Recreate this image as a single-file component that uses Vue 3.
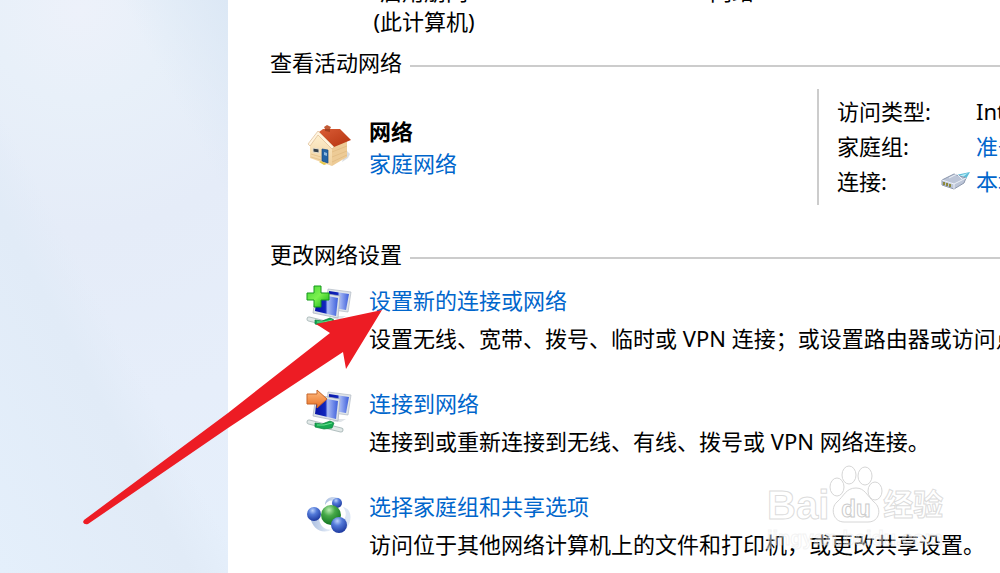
<script setup>
	import {ref} from 'vue'

	const info = ref([
		{label: '访问类型:', value: 'Internet', link: false},
		{label: '家庭组:', value: '准备创建', link: true},
		{label: '连接:', value: '本地连接', link: true, plug: true},
	])

	const tasks = ref([
		{icon: 'add', title: '设置新的连接或网络', text: '设置无线、宽带、拨号、临时或 VPN 连接；或设置路由器或访问点。'},
		{icon: 'connect', title: '连接到网络', text: '连接到或重新连接到无线、有线、拨号或 VPN 网络连接。'},
		{icon: 'group', title: '选择家庭组和共享选项', text: '访问位于其他网络计算机上的文件和打印机，或更改共享设置。'},
	])
</script>

<template>
	<div class="page">
		<aside class="side"></aside>
		<main class="main">
			<div class="map">
				<div class="computer">启用朋网<br>(此计算机)</div>
				<div class="middle">网络</div>
				<div class="internet">Internet</div>
			</div>

			<h2 class="title">查看活动网络</h2>
			<section class="active">
				<svg class="house" viewBox="0 0 48 48">
					<defs>
						<linearGradient id="roof" x1="0" y1="0" x2="1" y2="1">
							<stop offset="0" stop-color="#d95c36" />
							<stop offset="1" stop-color="#b5330f" />
						</linearGradient>
						<linearGradient id="wall" x1="0" y1="0" x2="0" y2="1">
							<stop offset="0" stop-color="#fff0cf" />
							<stop offset="1" stop-color="#efcf9c" />
						</linearGradient>
					</defs>
					<path d="M40 26L44 30L42 34L36 38Z" fill="#c9ced6" opacity=".7" />
					<path d="M26 22L41 16V33L26 42Z" fill="#edcb96" />
					<path d="M4 21L12 10L26 23V42L4 34Z" fill="url(#wall)" />
					<path d="M26 28L41 22M26 33L41 27M26 38L41 31M5 30L15 33M5 33L15 36" stroke="#dcb57c" stroke-width=".6" />
					<path d="M13 8L17 5H34L45 16L28 23Z" fill="url(#roof)" />
					<path d="M19 3H24V8L19 7Z" fill="#a5401f" />
					<path d="M18 3L21 1L25 3L24 5H19Z" fill="#c25b36" />
					<path d="M2 20L12 7L28 23L26 25L12 11L4 22Z" fill="#fff4df" stroke="#d9b285" stroke-width=".6" />
					<path d="M7 24L13 25V29L7 28Z" fill="#333f49" stroke="#e9e1cf" />
					<path d="M16 25L22 26V39L16 37Z" fill="#2464a6" stroke="#17497f" stroke-width=".7" />
					<path d="M18 28L21 29V32L18 31Z" fill="#8fb9de" />
					<path d="M15 37L21 40L18 41L13 38Z" fill="#e6c84a" />
				</svg>
				<div class="network">
					<strong>网络</strong>
					<a href="#">家庭网络</a>
				</div>
				<dl class="info">
					<div v-for="item in info" :key="item.label" class="info-row">
						<dt>{{ item.label }}</dt>
						<dd>
							<svg v-if="item.plug" class="plug" viewBox="0 0 30 20">
								<path d="M15 4L29 1L25 8L21 11Z" fill="#5dbbd8" />
								<path d="M17 5L27 2L22 6Z" fill="#b5edf6" />
								<path d="M1 9L13 3L25 7L23 12L13 18L1 14Z" fill="#bcc5d7" stroke="#8c97ad" />
								<path d="M1 9L13 13L25 7M13 13V18M8 7L16 3L21 8" fill="none" stroke="#edf1f8" />
								<path d="M3 11V14M6 12V15M9 13V16" stroke="#8d8a3c" stroke-width="2" />
							</svg>
							<a v-if="item.link" href="#">{{ item.value }}</a>
							<span v-else>{{ item.value }}</span>
						</dd>
					</div>
				</dl>
			</section>

			<h2 class="title">更改网络设置</h2>
			<ul class="tasks">
				<li v-for="task in tasks" :key="task.icon" class="task">
					<svg v-if="task.icon == 'group'" class="icon" viewBox="0 0 48 48">
						<defs>
							<radialGradient id="blue" cx=".4" cy=".25" r=".75">
								<stop offset="0" stop-color="#b9d0fb" />
								<stop offset=".4" stop-color="#5279d8" />
								<stop offset="1" stop-color="#1d399f" />
							</radialGradient>
							<radialGradient id="green" cx=".4" cy=".25" r=".75">
								<stop offset="0" stop-color="#b9edb0" />
								<stop offset=".4" stop-color="#47a949" />
								<stop offset="1" stop-color="#107320" />
							</radialGradient>
							<linearGradient id="swirl">
								<stop offset="0" stop-color="#a9bddf" />
								<stop offset="1" stop-color="#eef4fb" />
							</linearGradient>
						</defs>
						<path d="M4 25C6 39 17 44 27 38C18 40 13 34 13 26Z" fill="url(#swirl)" />
						<path d="M19 14C19 5 30 4 36 9L31 12C26 8 22 9 19 14Z" fill="url(#swirl)" />
						<path d="M37 16C47 18 46 31 40 38L35 31C41 27 41 21 37 16Z" fill="#dce6f4" />
						<circle cx="31" cy="12" r="5" fill="url(#blue)" />
						<circle cx="8" cy="23" r="7" fill="url(#blue)" />
						<circle cx="25" cy="24" r="10" fill="url(#green)" />
						<circle cx="33" cy="34" r="8" fill="url(#blue)" />
					</svg>
					<svg v-else class="icon" viewBox="0 0 48 48">
						<defs>
							<linearGradient id="screen" x1="0" y1="0" x2="1" y2="0">
								<stop offset="0" stop-color="#0713a5" />
								<stop offset=".45" stop-color="#1026bc" />
								<stop offset=".55" stop-color="#a9bbf5" />
								<stop offset="1" stop-color="#3c5edb" />
							</linearGradient>
							<linearGradient id="orange" x1="0" y1="0" x2="0" y2="1">
								<stop offset="0" stop-color="#ffbd82" />
								<stop offset="1" stop-color="#e86f22" />
							</linearGradient>
							<linearGradient id="plus" x1="0" y1="0" x2="1" y2="1">
								<stop offset="0" stop-color="#48d43b" />
								<stop offset=".5" stop-color="#7cf24e" />
								<stop offset="1" stop-color="#0caa14" />
							</linearGradient>
						</defs>
						<path d="M28 31L40 31L35 34L26 34Z" fill="#e1e5e9" />
						<path d="M22 4L45 7L42 27L20 24Z" fill="#dfe4e9" stroke="#b2bac4" stroke-width=".7" />
						<path d="M23 6L43 9L40 25L22 22Z" fill="url(#screen)" />
						<path d="M10 7L34 11L32 33L7 28Z" fill="#dce2e8" stroke="#a6afba" stroke-width=".7" />
						<path d="M11 9L32 13L30 31L9 26Z" fill="url(#screen)" />
						<path d="M25 33V36" stroke="#bbc5c7" stroke-width="3" />
						<path d="M3 34L35 42" stroke="#b3c0c0" stroke-width="5" stroke-linecap="round" />
						<path d="M3 34L35 42" stroke="#e2e9e8" stroke-width="3" stroke-linecap="round" />
						<path d="M9 35L16 36L24 33L28 35L26 40L18 41L9 39Z" fill="#16a951" stroke="#078239" stroke-width=".7" />
						<path d="M11 37H18L26 35" fill="none" stroke="#6be492" />
						<path v-if="task.icon == 'add'" d="M8 1H15V8H23V15H15V22H8V15H1V8H8Z" fill="url(#plus)" stroke="#159a1a" />
						<path v-else d="M1 6H11V2L21 11L11 20V16H1Z" fill="url(#orange)" stroke="#c56529" />
					</svg>
					<div class="words">
						<a href="#">{{ task.title }}</a>
						<p>{{ task.text }}</p>
					</div>
				</li>
			</ul>
		</main>

		<svg class="arrow" viewBox="0 0 300 216">
			<path d="M1 211L145 104L247 24L233 15L299 1L263 60L260 43L145 119L5 215Q1 216 0 213Z" fill="#ed1c24" />
		</svg>

		<div class="watermark">
			<div class="brand">
				<span>Bai</span>
				<svg class="paw" viewBox="0 0 54 58">
					<g fill="#fff" fill-opacity=".7" stroke="#d6d6d6">
						<ellipse cx="8" cy="22" rx="7" ry="9" />
						<ellipse cx="20" cy="10" rx="7" ry="9" />
						<ellipse cx="36" cy="11" rx="7" ry="9" />
						<ellipse cx="46" cy="26" rx="7" ry="9" />
						<path d="M27 23C17 23 15 31 8 37C1 43 4 57 15 57H39C51 57 53 43 45 37C38 31 36 23 27 23Z" />
					</g>
					<text x="27" y="52" text-anchor="middle">du</text>
				</svg>
				<span class="jingyan">经验</span>
			</div>
			<div class="site">jingyan.baidu.com</div>
		</div>
	</div>
</template>

<style>
	body{
		margin: 0;
		background: #fff;
	}
</style>

<style scoped>
	.page{
		position: relative;
		display: flex;
		height: 100vh;
		overflow: hidden;
		font-family: "Noto Sans", "Noto Sans CJK SC", sans-serif;
		font-size: 22px;
		line-height: 30px;
		color: #000;
	}

	a{
		color: #0066cc;
		text-decoration: none;
	}

	.side{
		flex: 0 0 228px;
		background:
			linear-gradient(62deg, #e4effb 0%, #e1ebf7 36%, rgba(226, 237, 249, 0) 46%),
			linear-gradient(242deg, #dce8f5 0%, rgba(223, 233, 246, 0) 20%),
			radial-gradient(circle at 80px 10px, #edf1fa 0, #e8f0f9 90px, #e5ecf8 220px, #e6eefa 400px, #e5effb 560px);
	}

	.main{
		flex: 1;
		min-width: 0;
		padding-left: 42px;
		overflow: hidden;
		white-space: nowrap;
	}

	.map{
		display: flex;
		height: 71px;
		margin-top: -24px;
	}
	.computer, .middle{
		flex: none;
		width: 308px;
		text-align: center;
	}
	.internet{
		flex: none;
		margin-left: 112px;
	}

	.title{
		display: flex;
		align-items: center;
		gap: 8px;
		margin: 0;
		font-size: 22px;
		font-weight: 400;
	}
	.title::after{
		content: "";
		flex: 1;
		height: 2px;
		margin-top: 8px;
		background: #ccc;
	}

	.active{
		display: flex;
		height: 116px;
		margin: 12px 0 34px;
		padding-left: 36px;
	}
	.house{
		flex: none;
		width: 48px;
		height: 48px;
		margin-top: 35px;
	}
	.network{
		display: flex;
		flex: 1;
		flex-direction: column;
		gap: 2px;
		padding: 27px 0 0 15px;
	}

	.info{
		box-sizing: border-box;
		flex: none;
		width: 183px;
		margin: 0;
		padding: 7px 0 0 18px;
		border-left: 2px solid #ccc;
	}
	.info-row{
		display: flex;
		height: 35px;
	}
	.info dt{
		flex: none;
		width: 104px;
	}
	.info dd{
		display: flex;
		flex: none;
		align-items: center;
		height: 30px;
		margin: 0;
		padding-left: 35px;
	}
	.plug{
		flex: none;
		width: 30px;
		height: 20px;
		margin: 0 5px 0 -35px;
	}

	.tasks{
		margin: 16px 0 0;
		padding: 0 0 0 36px;
		list-style: none;
	}
	.task{
		display: flex;
		height: 103px;
	}
	.icon{
		flex: none;
		width: 48px;
		height: 48px;
	}
	.words{
		padding-left: 15px;
	}
	.words p{
		margin: 8px 0 0;
	}

	.arrow{
		position: absolute;
		left: 83px;
		top: 309px;
		width: 300px;
		height: 216px;
	}

	.watermark{
		position: absolute;
		left: 767px;
		top: 465px;
		color: rgba(255, 255, 255, 0.7);
		-webkit-text-stroke: 1px rgba(205, 205, 205, 0.7);
	}
	.brand{
		display: flex;
		align-items: flex-end;
		height: 58px;
		font-family: "Liberation Sans", "Noto Sans CJK SC", sans-serif;
		font-size: 40px;
		font-weight: 700;
		line-height: 36px;
	}
	.paw{
		width: 54px;
		height: 58px;
	}
	.paw text{
		font-size: 24px;
		fill: #fff;
		stroke: #ccc;
	}
	.jingyan{
		font-size: 30px;
	}
	.site{
		font-family: "Liberation Sans", sans-serif;
		font-size: 20px;
		font-weight: 700;
		line-height: 30px;
		color: rgba(255, 255, 255, 0.4);
		-webkit-text-stroke: 1px rgba(225, 225, 225, 0.4);
	}
</style>
